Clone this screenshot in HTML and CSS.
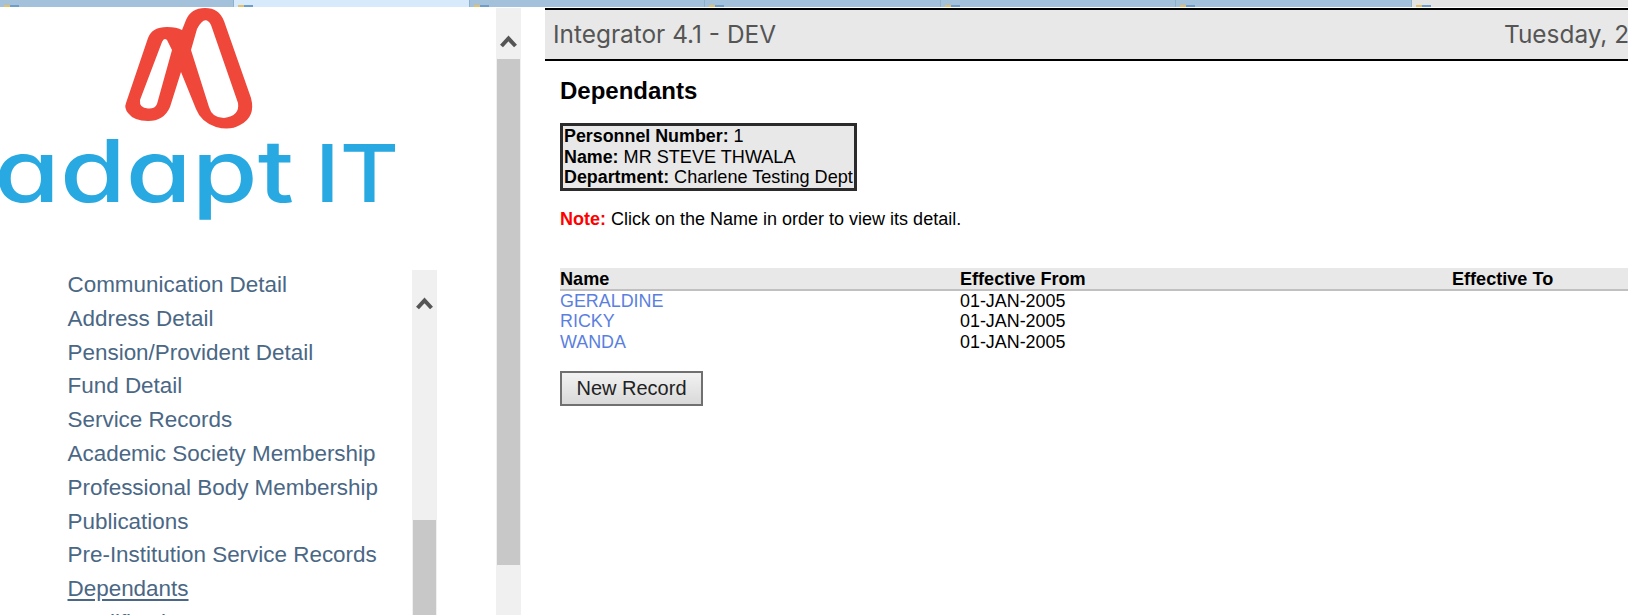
FILE: index.html
```html
<!DOCTYPE html>
<html lang="en">
<head>
<meta charset="utf-8">
<title>Dependants</title>
<link rel="stylesheet" href="styles.css">
</head>
<body>
<div class="tabs">
  <div class="tab tab-a"><i class="fav"></i></div>
  <div class="tab tab-on"><i class="fav"></i></div>
  <div class="tab tab-a"><i class="fav"></i></div>
  <div class="tab tab-a"><i class="fav"></i></div>
  <div class="tab tab-a"><i class="fav"></i></div>
  <div class="tab tab-a"><i class="fav"></i></div>
  <div class="tab tab-last"><i class="fav"></i></div>
</div>
<div class="page">
  <aside class="side">
    <div class="side-main">
      <svg class="logo" viewBox="0 8 496 260" width="496" height="260" aria-label="Adapt IT logo">
        <path class="logo-mark" fill-rule="evenodd" d="M126 103 L148 38 Q152 27 167 27 Q177 27 182 30 L186 20 Q191 8 205 8 Q219 8 224 21 L251 98 Q256 117 240 125 Q230 131 216 127 Q201 122 196 109 L181 72 L170 107 Q164 121 148 121 Q134 121 128 113 Q124 108 126 103 Z M140 100 Q139 108 148 108.500 Q155 109 157 104 L172 50 L167 40 Q164 37 162 42 Z M191 50 L197 29 Q205 14 211 25 L238 103 Q240 116 224 118 Q212 118 209 107 Z"/>
        <text class="logo-word" x="-6" y="202" textLength="300" lengthAdjust="spacingAndGlyphs">adapt</text>
        <text class="logo-word logo-caps" x="315" y="202" textLength="84" lengthAdjust="spacingAndGlyphs">IT</text>
      </svg>
      <div class="nav-wrap">
        <ul class="nav">
          <li><a href="#">Communication Detail</a></li>
          <li><a href="#">Address Detail</a></li>
          <li><a href="#">Pension/Provident Detail</a></li>
          <li><a href="#">Fund Detail</a></li>
          <li><a href="#">Service Records</a></li>
          <li><a href="#">Academic Society Membership</a></li>
          <li><a href="#">Professional Body Membership</a></li>
          <li><a href="#">Publications</a></li>
          <li><a href="#">Pre-Institution Service Records</a></li>
          <li><a class="current" href="#">Dependants</a></li>
          <li><a href="#">Qualifications</a></li>
        </ul>
        <div class="sbar sbar-inner">
          <svg class="sbar-arrow" viewBox="0 0 17 13" width="17" height="13"><path d="M1.500 11 L8.500 3.500 L15.500 11" /></svg>
          <div class="thumb thumb-inner"></div>
        </div>
      </div>
    </div>
    <div class="sbar sbar-outer">
      <svg class="sbar-arrow" viewBox="0 0 17 13" width="17" height="13"><path d="M1.500 11 L8.500 3.500 L15.500 11" /></svg>
      <div class="thumb thumb-outer"></div>
    </div>
  </aside>
  <main class="main">
    <header class="topbar">
      <span class="app-title">Integrator 4.1 - DEV</span>
      <span class="app-date">Tuesday, 24</span>
    </header>
    <section class="content">
      <h2 class="title">Dependants</h2>
      <div class="info">
        <div><b>Personnel Number:</b> 1</div>
        <div><b>Name:</b> MR STEVE THWALA</div>
        <div><b>Department:</b> Charlene Testing Dept</div>
      </div>
      <p class="note"><b>Note:</b> Click on the Name in order to view its detail.</p>
      <table class="grid">
        <thead>
          <tr><th class="col-name">Name</th><th class="col-from">Effective From</th><th>Effective To</th></tr>
        </thead>
        <tbody>
          <tr><td><a href="#">GERALDINE</a></td><td>01-JAN-2005</td><td></td></tr>
          <tr><td><a href="#">RICKY</a></td><td>01-JAN-2005</td><td></td></tr>
          <tr><td><a href="#">WANDA</a></td><td>01-JAN-2005</td><td></td></tr>
        </tbody>
      </table>
      <button class="btn" type="button">New Record</button>
    </section>
  </main>
</div>
</body>
</html>
```

FILE: styles.css
```css
* { box-sizing: border-box; }
html, body { margin: 0; height: 615px; overflow: hidden; background: #fff; }
body { font-family: "Liberation Sans", Arial, sans-serif; color: #000; font-size: 18px; }

.tabs { display: flex; height: 7px; overflow: hidden; background: #a3c1da; }
.tab { width: 235.500px; height: 7px; border-left: 1px solid #8fb0cb; padding: 5px 0 0 4px; flex: none; }
.tab:first-child { width: 233px; border-left: 0; }
.tab-a { background: #a3c1da; }
.tab-on { background: #d6eafc; }
.tab-last { flex: 1; background: #e2e2e2; }
.fav { display: block; width: 15px; height: 2px; background: linear-gradient(90deg, #e3c069 0 40%, #6d9dc9 40% 100%); }

.page { display: flex; height: 607px; margin-top: 1px; }

.side { width: 545px; flex: none; display: flex; }
.side-main { width: 496px; flex: none; overflow: hidden; }
.logo { display: block; }
.logo-mark { fill: #f0473b; }
.logo-word { font-family: Inter, sans-serif; font-size: 86px; font-weight: 500; fill: #29a9e1; font-feature-settings: "cv11" 1; }
.logo-caps { font-size: 80px; font-weight: 500; }

.nav-wrap { display: flex; width: 437px; height: 347px; overflow: hidden; }
.nav { list-style: none; margin: 0; padding: 0 0 0 67.500px; flex: 1; font-size: 22.450px; line-height: 33.800px; white-space: nowrap; }
.nav a { color: #4a6785; text-decoration: none; }
.nav a.current { text-decoration: underline; text-underline-offset: 3px; }

.sbar { width: 25px; flex: none; background: #f0f0f0; display: flex; flex-direction: column; align-items: center; }
.sbar-inner { margin-top: 2px; }
.sbar-outer { height: 607px; }
.sbar-arrow { display: block; margin-top: 27px; flex: none; }
.sbar-arrow path { fill: none; stroke: #555; stroke-width: 4; }
.thumb { width: 23px; background: #c8c8c8; flex: none; }
.thumb-inner { margin-top: 210px; height: 95px; }
.thumb-outer { margin-top: 11px; height: 506px; }

.main { flex: 1; min-width: 0; overflow: hidden; }
.topbar { display: grid; grid-template-columns: 951px 1fr; align-items: center; height: 53px; padding: 0 0 2px 8px; background: #e8e8e8; border-top: 2px solid #000; border-bottom: 2px solid #000; overflow: hidden; white-space: nowrap; color: #555; font-family: Inter, sans-serif; font-size: 24.400px; }

.content { padding: 0 0 0 15px; }
.title { margin: 16px 0 0; font-size: 24px; line-height: 27px; font-weight: bold; }
.info { width: 297px; margin-top: 19px; border: 3px solid #2b2b2b; background: #e8e8e8; padding: 0 0 0 1px; font-size: 18.100px; line-height: 20.700px; white-space: nowrap; overflow: hidden; }
.info b { font-size: 17.850px; }
.note { margin: 18px 0 0; font-size: 18px; line-height: 21px; }
.note b { color: #f00; }

.grid { width: 100%; margin-top: 38px; border-collapse: collapse; table-layout: fixed; font-size: 17.900px; line-height: 20.700px; }
.grid th { text-align: left; vertical-align: bottom; padding: 1px 0 0; background: #e8e8e8; border-bottom: 2px solid #c0c0c0; height: 22px; font-size: 18.100px; line-height: 20px; }
.grid td { padding: 0; height: 20.500px; line-height: 20px; }
.col-name { width: 400px; }
.col-from { width: 492px; }
.grid a { color: #5b7fe0; text-decoration: none; }

.btn { display: block; margin-top: 19px; width: 143px; height: 35px; padding: 0; border: 2px solid #707070; background: linear-gradient(#f2f2f2, #d9d9d9); color: #222; font-family: inherit; font-size: 20px; }
```
